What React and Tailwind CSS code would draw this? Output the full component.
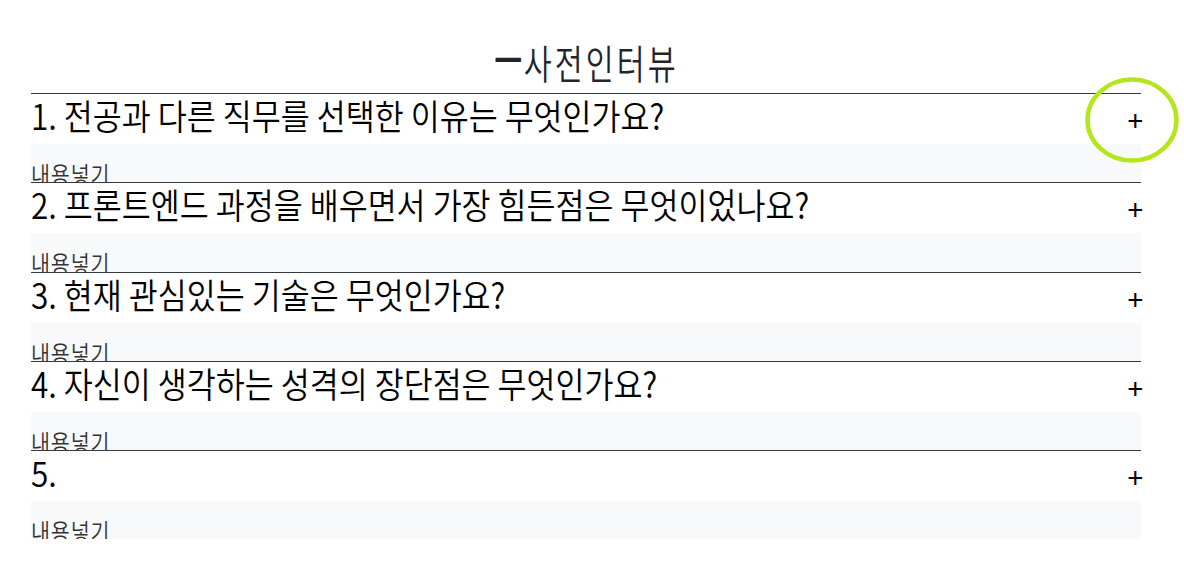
import React from "react";

const items = [
  "1. 전공과 다른 직무를 선택한 이유는 무엇인가요?",
  "2. 프론트엔드 과정을 배우면서 가장 힘든점은 무엇이었나요?",
  "3. 현재 관심있는 기술은 무엇인가요?",
  "4. 자신이 생각하는 성격의 장단점은 무엇인가요?",
  "5.",
];

export default function App() {
  return (
    <div
      className="relative w-[1184px] h-[585px] bg-white overflow-hidden"
      style={{ fontFamily: '"Noto Sans CJK KR", "Noto Sans", sans-serif' }}
    >
      <div className="ml-[31px] w-[1110px] pt-[34px]">
        <h1 className="mb-[2px] h-[57px] text-center text-[40px] leading-[57px] font-[350] text-[#212529]">
          <span className="inline-block origin-center scale-x-[0.76] tracking-[4px] whitespace-nowrap">
            <span className="inline-block align-[4px] leading-none font-bold tracking-[-4px] pr-[6px]">ㅡ</span>
            사전인터뷰
          </span>
        </h1>
        <div className="flex flex-col">
          {items.map((q, i) => (
            <div key={i} className="flex flex-col">
              <div className="flex h-[51px] items-center justify-between border-t border-[#343a40]">
                <div className="self-start whitespace-nowrap origin-left scale-x-[0.9] text-[35px] leading-[42px] tracking-[0px] font-[350] text-black">
                  {q}
                </div>
                <span className="-mr-[2px] text-[28px] leading-none font-normal text-black">
                  +
                </span>
              </div>
              <div className="h-[38.25px] overflow-hidden bg-[#f8f9fa] pt-[15px]">
                <p className="origin-left scale-x-[0.86] whitespace-nowrap text-[24px] leading-[30px] tracking-[1px] font-[350] text-[#333]">
                  내용넣기
                </p>
              </div>
            </div>
          ))}
        </div>
      </div>
      <svg
        className="absolute left-[1085px] top-[77px]"
        width="94"
        height="86"
        viewBox="0 0 94 86"
      >
        <ellipse cx="47" cy="43" rx="44.5" ry="40.5" fill="none" stroke="#b5e61d" strokeWidth="4.5" />
      </svg>
    </div>
  );
}
